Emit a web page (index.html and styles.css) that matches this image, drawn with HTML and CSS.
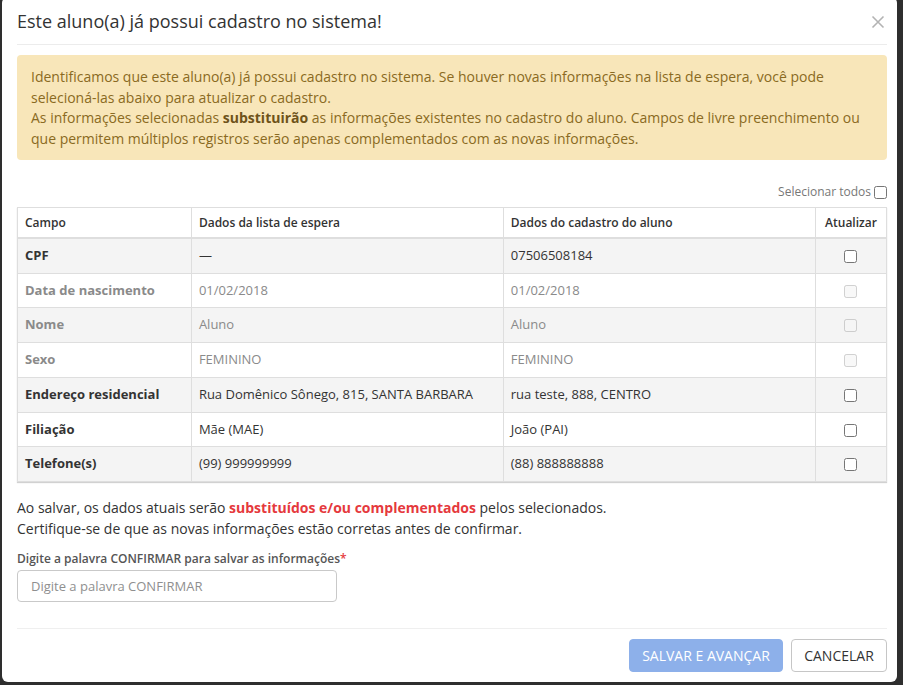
FILE: index.html
```html
<!DOCTYPE html>
<html lang="pt-BR">
<head>
<meta charset="utf-8">
<title>Aluno já cadastrado</title>
<link rel="stylesheet" href="styles.css">
</head>
<body>
<div class="modal">
  <div class="modal-header">
    <h4 class="modal-title">Este aluno(a) já possui cadastro no sistema!</h4>
    <button class="close" type="button" aria-label="Fechar">
      <svg width="14" height="14" viewBox="0 0 14 14"><path d="M1.5 1.5 L12.5 12.5 M12.5 1.5 L1.5 12.5" stroke="#b3b3b3" stroke-width="1.6" fill="none"/></svg>
    </button>
  </div>

  <div class="modal-body">
    <div class="alert">
      Identificamos que este aluno(a) já possui cadastro no sistema. Se houver novas informações na lista de espera, você pode selecioná-las abaixo para atualizar o cadastro.<br>
      As informações selecionadas <strong>substituirão</strong> as informações existentes no cadastro do aluno. Campos de livre preenchimento ou que permitem múltiplos registros serão apenas complementados com as novas informações.
    </div>

    <div class="select-all">
      <label>Selecionar todos <input type="checkbox"></label>
    </div>

    <table class="compare">
      <thead>
        <tr>
          <th class="col-field">Campo</th>
          <th class="col-wait">Dados da lista de espera</th>
          <th class="col-current">Dados do cadastro do aluno</th>
          <th class="col-check">Atualizar</th>
        </tr>
      </thead>
      <tbody>
        <tr>
          <td class="field">CPF</td>
          <td>—</td>
          <td>07506508184</td>
          <td class="check"><input type="checkbox"></td>
        </tr>
        <tr class="disabled">
          <td class="field">Data de nascimento</td>
          <td>01/02/2018</td>
          <td>01/02/2018</td>
          <td class="check"><input type="checkbox" disabled></td>
        </tr>
        <tr class="disabled">
          <td class="field">Nome</td>
          <td>Aluno</td>
          <td>Aluno</td>
          <td class="check"><input type="checkbox" disabled></td>
        </tr>
        <tr class="disabled">
          <td class="field">Sexo</td>
          <td>FEMININO</td>
          <td>FEMININO</td>
          <td class="check"><input type="checkbox" disabled></td>
        </tr>
        <tr>
          <td class="field">Endereço residencial</td>
          <td>Rua Domênico Sônego, 815, SANTA BARBARA</td>
          <td>rua teste, 888, CENTRO</td>
          <td class="check"><input type="checkbox"></td>
        </tr>
        <tr>
          <td class="field">Filiação</td>
          <td>Mãe (MAE)</td>
          <td>João (PAI)</td>
          <td class="check"><input type="checkbox"></td>
        </tr>
        <tr>
          <td class="field">Telefone(s)</td>
          <td>(99) 999999999</td>
          <td>(88) 888888888</td>
          <td class="check"><input type="checkbox"></td>
        </tr>
      </tbody>
    </table>

    <p class="notice">
      Ao salvar, os dados atuais serão <strong class="danger">substituídos e/ou complementados</strong> pelos selecionados.<br>
      Certifique-se de que as novas informações estão corretas antes de confirmar.
    </p>

    <div class="form-group">
      <label class="control-label" for="confirm">Digite a palavra CONFIRMAR para salvar as informações<span class="req">*</span></label>
      <input class="form-control" id="confirm" type="text" placeholder="Digite a palavra CONFIRMAR">
    </div>
  </div>

  <div class="modal-footer">
    <button class="btn btn-primary" type="button" disabled>SALVAR E AVANÇAR</button>
    <button class="btn btn-default" type="button">CANCELAR</button>
  </div>
</div>
</body>
</html>
```

FILE: styles.css
```css
* {
  box-sizing: border-box;
}

html, body {
  margin: 0;
  padding: 0;
  height: 100%;
  overflow: hidden;
}

body {
  background: #2e2e2e;
  font-family: "Open Sans", "Noto Sans", "Liberation Sans", sans-serif;
  font-size: 14px;
  color: #333;
}

.modal {
  width: 895px;
  margin: -3px 0 0 2px;
  background: #fff;
  border-radius: 6px;
  padding-top: 3px;
}

/* header */
.modal-header {
  display: flex;
  align-items: center;
  justify-content: space-between;
  margin: 0 10px 0 15px;
  padding: 8px 0 10px;
  border-bottom: 1px solid #ececec;
}

.modal-title {
  margin: 0;
  font-size: 18px;
  font-weight: 400;
  line-height: 26px;
  color: #333;
}

.close {
  border: 0;
  background: none;
  padding: 0;
  margin-right: 2px;
  margin-top: 1px;
  width: 14px;
  height: 14px;
  display: flex;
  cursor: pointer;
}

/* body */
.modal-body {
  padding: 10px 10px 26px 15px;
}

.alert {
  background: #f8e6b9;
  color: #8a6a22;
  border-radius: 4px;
  padding: 12px 14px 11px;
  line-height: 20.5px;
  font-size: 14px;
}

.alert strong {
  color: #6e531a;
  font-weight: 700;
}

.select-all {
  margin-top: 22px;
  margin-bottom: 5px;
  text-align: right;
  font-size: 12px;
  line-height: 20px;
  color: #777;
}

.select-all label {
  display: inline-flex;
  align-items: center;
  gap: 2px;
}

.select-all input {
  margin: 0 0 0 1px;
  width: 13px;
  height: 13px;
}

/* comparison table */
.compare {
  width: 100%;
  border-collapse: collapse;
  border: 1px solid #dedede;
  box-shadow: 0 1px 1px rgba(0, 0, 0, 0.18);
  font-size: 13px;
}

.compare th {
  text-align: left;
  font-size: 12px;
  font-weight: 600;
  color: #333;
  padding: 5px 8px 4px 7px;
  line-height: 20px;
  border-left: 1px solid #dedede;
  border-bottom: 2px solid #dedede;
  background: #fff;
}

.compare th.col-check {
  text-align: center;
  padding-left: 4px;
  padding-right: 4px;
}

.col-field { width: 174px; }
.col-wait { width: 312px; }
.col-current { width: 313px; }
.col-check { width: 71px; }

.compare td {
  padding: 7px 8px 7px 7px;
  line-height: 19.7px;
  border-left: 1px solid #dedede;
  border-top: 1px solid #dedede;
  color: #333;
  white-space: nowrap;
}

.compare tbody tr:nth-child(odd) td {
  background: #f4f4f4;
}

.compare td.field {
  font-weight: 700;
}

.compare td.check {
  text-align: center;
  padding-top: 5px;
  padding-bottom: 5px;
}

.compare td.check input {
  width: 13px;
  height: 13px;
  margin: 0;
  vertical-align: middle;
}

.compare tr.disabled td {
  color: #8a8a8a;
}

/* notice and confirmation field */
.notice {
  margin: 15px 0 0;
  line-height: 21px;
  font-size: 14px;
  color: #333;
}

.danger {
  color: #e5393d;
  font-weight: 700;
}

.form-group {
  margin-top: 11px;
}

.control-label {
  display: block;
  font-size: 12px;
  font-weight: 600;
  line-height: 17px;
  color: #555;
  margin-bottom: 3px;
}

.req {
  color: #e5393d;
}

.form-control {
  display: block;
  width: 320px;
  height: 32px;
  border: 1px solid #c9c9c9;
  border-radius: 4px;
  padding: 0 13px;
  font-family: inherit;
  font-size: 13px;
  color: #333;
  background: #fff;
}

.form-control::placeholder {
  color: #8f8f8f;
}

/* footer */
.modal-footer {
  display: flex;
  justify-content: flex-end;
  gap: 8px;
  margin: 0 10px 0 15px;
  padding: 10px 0;
  border-top: 1px solid #efefef;
}

.btn {
  height: 33px;
  padding: 0 12px;
  border-radius: 4px;
  font-family: inherit;
  font-size: 14px;
  line-height: 31px;
}

.btn-primary {
  width: 154px;
  background: #8db0ea;
  border: 1px solid #8db0ea;
  color: #fff;
}

.btn-default {
  width: 96px;
  background: #fff;
  border: 1px solid #c6c6c6;
  color: #333;
}
```
